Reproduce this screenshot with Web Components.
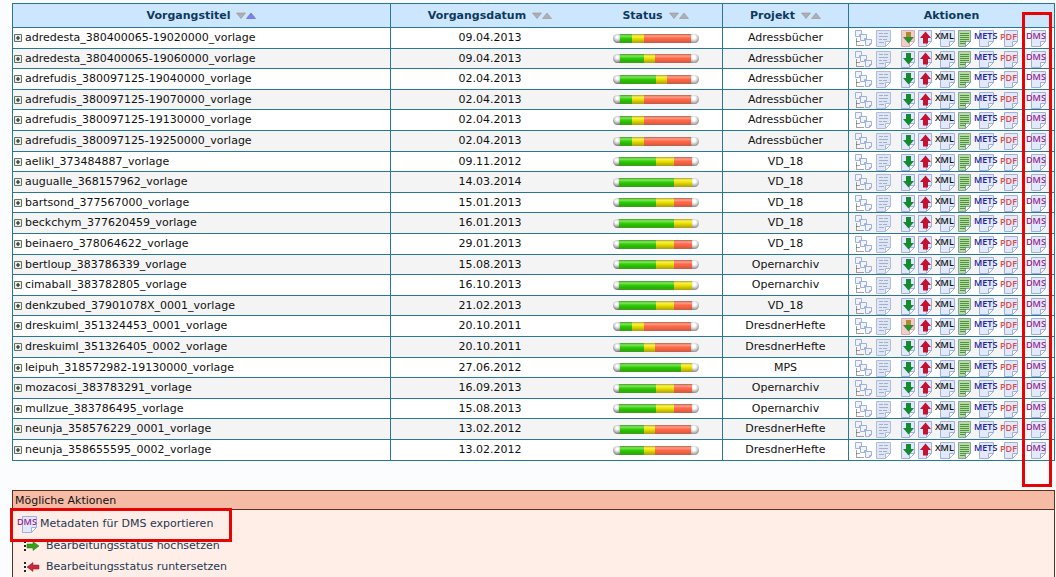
<!DOCTYPE html>
<html lang="de">
<head>
<meta charset="utf-8">
<title>Vorgänge</title>
<style>
html, body { margin: 0; }
body { background: #fbfcfe; color: #111; font: 11px/16px "DejaVu Sans", Verdana, sans-serif; }
</style>
</head>
<body>
<process-page></process-page>

<template id="page">
<style>
:host { display: flex; flex-direction: column; box-sizing: border-box; min-height: 100vh; padding: 3px 1px 0 12px; gap: 29px; }
action-legend { flex: 1; }
</style>
<process-table></process-table>
<action-legend>
  <span slot="title">Mögliche Aktionen</span>
  <legend-entry icon="dms" marked>Metadaten für DMS exportieren</legend-entry>
  <legend-entry icon="up">Bearbeitungsstatus hochsetzen</legend-entry>
  <legend-entry icon="down">Bearbeitungsstatus runtersetzen</legend-entry>
</action-legend>
</template>

<template id="table">
<style>
:host { display: block; position: relative; }
table { width: 100%; table-layout: fixed; border-spacing: 0; border: solid #2a7698; border-width: 1px 0 0 1px; background: #fff; }
th, td { box-sizing: border-box; height: 21px; padding: 0; border: solid #2a7698; border-width: 0 1px 1px 0; text-align: center; vertical-align: middle; line-height: 16px; white-space: nowrap; }
th { height: 24px; background: #cce6fe; color: #0d3a5c; }
th:nth-child(2), td:nth-child(2) { border-right: 0; }
tr:nth-child(5n+2) td, tr:nth-child(5n+4) td { height: 20px; }
tr:nth-child(even) td { background: #f4f4f4; }
td:first-child { text-align: left; }
td:last-child { padding-left: 6px; }
.title { display: flex; align-items: center; gap: 3px; padding-left: 1px; }
button { width: 8px; height: 8px; padding: 0; border: 0; background: none; display: block; }
button svg { display: block; }
status-bar { margin: 0 auto; }
.date { width: 198px; } .status { width: 134px; } .project { width: 126px; } .actions { width: 206px; }
.mark { position: absolute; top: 9px; right: 3px; bottom: -26px; width: 30px; box-sizing: border-box; border: 3px solid #e60505; pointer-events: none; }
</style>
<table>
  <colgroup><col><col class="date"><col class="status"><col class="project"><col class="actions"></colgroup>
  <thead><tr>
    <th scope="col"><sort-header active="up">Vorgangstitel</sort-header></th>
    <th scope="col"><sort-header>Vorgangsdatum</sort-header></th>
    <th scope="col"><sort-header>Status</sort-header></th>
    <th scope="col"><sort-header>Projekt</sort-header></th>
    <th scope="col">Aktionen</th>
  </tr></thead>
  <tbody></tbody>
</table>
<div class="mark"></div>
</template>

<template id="sort">
<style>
:host { display: flex; align-items: center; justify-content: center; gap: 6px; }
.arrows { display: flex; }
button { width: 10px; height: 8px; padding: 0; border: 0; background: none; }
svg { display: block; }
path { fill: #b0aeb0; stroke: #969496; stroke-width: .6; }
:host([active="up"]) .up path { fill: #8080ec; stroke: #5c5cd0; }
</style>
<slot></slot>
<span class="arrows">
  <button aria-label="Absteigend sortieren"><svg width="10" height="8"><path d="M.5 1H9.500L5 6.500Z"/></svg></button>
  <button class="up" aria-label="Aufsteigend sortieren"><svg width="10" height="8"><path d="M.5 6.500H9.500L5 1Z"/></svg></button>
</span>
</template>

<template id="status">
<style>
:host { display: flex; width: 86px; height: 9px; }
i { height: 9px; }
.cap { flex: 1; border-radius: 5px 0 0 5px; background: radial-gradient(circle at 60% 35%, #fff 15%, #c8c8c8 45%, #555 95%); }
.cap.end { border-radius: 0 5px 5px 0; background: radial-gradient(circle at 35% 35%, #fff 20%, #c8c8c8 50%, #666 95%); }
.g { background: linear-gradient(#3f9a22, #86e660 22%, #35cf0c 45%, #27b800 70%, #3b9c1c); }
.y { background: linear-gradient(#aaa020, #f8f060 22%, #efe500 45%, #cfc400 70%, #a89c20); }
.r { background: linear-gradient(#b86048, #ffa08a 22%, #ff6a4c 45%, #f4603f 70%, #b8604c); }
</style>
<i class="cap"></i><i class="g"></i><i class="y"></i><i class="r"></i><i class="cap end"></i>
</template>

<template id="actions">
<style>
:host { display: flex; align-items: center; height: 18px; }
a { display: block; height: 18px; }
a + a { margin-left: 2px; }
a.doc { margin-left: 4px; }
a.green { margin-left: 9px; }
a.dms { margin-left: 8px; }
</style>
</template>

<template id="legend">
<style>
:host { display: block; border: solid #5e3020; border-width: 1px 1px 0 1px; background: #ffeee8; }
header { height: 18px; padding-left: 2px; line-height: 19px; background: #f5bba5; border-bottom: 1px solid #5e3020; }
.list { display: flex; flex-direction: column; }
</style>
<header><slot name="title"></slot></header>
<div class="list"><slot></slot></div>
</template>

<template id="entry">
<style>
:host { display: block; position: relative; height: 21px; color: #1c3850; }
:host([marked]) { height: 25px; z-index: 1; }
a { display: flex; align-items: center; height: 100%; gap: 6px; padding-left: 9px; color: inherit; text-decoration: none; }
:host([marked]) a { gap: 3px; padding: 2px 0 0 4px; height: 24px; }
.mark { display: none; }
:host([marked]) .mark { display: block; position: absolute; left: -3px; top: -2px; width: 222px; height: 34px; box-sizing: border-box; border: 3px solid #e60505; pointer-events: none; }
svg { display: block; }
</style>
<a href="#"><span class="icon"></span><slot></slot></a>
<div class="mark"></div>
</template>

<script>
const tpl = id => document.getElementById(id).content.cloneNode(true);
const svg = (w, body) => `<svg width="${w}" height="18" viewBox="0 0 ${w} 18" aria-hidden="true">${body}</svg>`;

// Folded sheet of paper, x is its left edge and w its width.
const sheet = (x, w, fill = '#e2e9fb', line = '#9fb1da') =>
  `<path d="M${x + .5} 1.500H${x + w - .5}V12.500L${x + w - 5.5} 17.500H${x + .5}Z" fill="${fill}" stroke="${line}"/>` +
  `<path d="M${x + w - .5} 12.500H${x + w - 5.5}V17.500Z" fill="#f8faff" stroke="${line}"/>`;
const label = (t, x, y, fill) =>
  `<text x="${x}" y="${y}" font-family="Open Sans, Noto Sans, sans-serif" font-size="9" font-weight="600" fill="${fill}">${t}</text>`;
const mini = (x, y) =>
  `<path d="M${x + .5} ${y + .5}h6v4l-2 2h-4z" fill="#f0f4ff" stroke="#9fb1da"/><path d="M${x + 6.5} ${y + 4.5}h-2v2" fill="none" stroke="#9fb1da"/>`;
const down = (top, bottom) =>
  `<path d="M5 3h5v5H13L7.500 14.500L2 8H5Z" fill="${bottom}"/><path d="M5 3h5v5h-5z" fill="${top}"/>`;

const icons = {
  tree: svg(17, '<path d="M1.500 9.500V16.500H9M1.500 12.500H5" fill="none" stroke="#444" stroke-dasharray="1 1"/>' +
    mini(0, 1) + mini(5, 5) + mini(10, 10)),
  doc: svg(16, sheet(0, 15, '#dfe6f5', '#adbbdc') +
    '<path d="M3 4.500h4m1 0h4M3 7.500h9M3 10.500h3m1 0h4M3 13.500h5" stroke="#a6afc4"/>'),
  green: svg(15, sheet(0, 14) + down('#168a30', '#168a30')),
  mixed: svg(15, sheet(0, 14, '#f3cccc', '#d9aeb8') + down('#b08a30', '#2a9030')),
  red: svg(15, sheet(0, 14) + '<path d="M5 14.500h5V9H13L7.500 2.500L2 9H5Z" fill="#c41230"/>'),
  xml: svg(21, sheet(5, 15) + label('XML', 0, 10, '#111')),
  list: svg(14, sheet(0, 13, '#b9dc9c', '#86a3a8') +
    '<path d="M2 4.500h9M2 6.500h9M2 8.500h9M2 10.500h9M2 12.500h6M2 14.500h5" stroke="#4c9448"/>'),
  mets: svg(24, sheet(5, 15) + label('METS', 0, 10, '#22229a')),
  pdf: svg(18, sheet(4, 14) + label('PDF', 0, 11, '#dc4a48')),
  dms: svg(20, sheet(5, 15) + label('DMS', 0, 10, '#96288e')),
  up: svg(18, '<path d="M2 4h2v2H2zM2 8h2v2H2zM2 12h2v2H2z" fill="#222"/><path d="M5 7h6V4.500L17 9L11 13.500V11H5Z" fill="#38a018" stroke="#257010" stroke-width=".5"/>'),
  down: svg(18, '<path d="M2 4h2v2H2zM2 8h2v2H2zM2 12h2v2H2z" fill="#222"/><path d="M17 7H11V4.500L5 9L11 13.500V11H17Z" fill="#c82838" stroke="#901828" stroke-width=".5"/>'),
  plus: '<svg width="8" height="8" aria-hidden="true"><path d="M.5.5h7v7h-7z" fill="#e6eee6" stroke="#647464"/><path d="M2 4h4M4 2v4" stroke="#222" stroke-width="1.200"/></svg>'
};

class Base extends HTMLElement {
  constructor(id) { super(); this.attachShadow({ mode: 'open' }).append(tpl(id)); }
}

customElements.define('sort-header', class extends Base { constructor() { super('sort'); } });

customElements.define('status-bar', class extends Base {
  constructor() { super('status'); }
  connectedCallback() {
    const parts = this.getAttribute('parts').split(' ').map(Number);
    ['g', 'y', 'r'].forEach((c, i) => { this.shadowRoot.querySelector('.' + c).style.width = parts[i] + 'px'; });
  }
});

customElements.define('row-actions', class extends Base {
  constructor() { super('actions'); }
  connectedCallback() {
    const second = this.hasAttribute('mixed') ? 'mixed' : 'green';
    const list = [['tree', 'Struktur'], ['doc', 'Metadaten'], ['green', 'Importieren'], ['red', 'Exportieren'],
      ['xml', 'Laufzettel'], ['list', 'Protokoll'], ['mets', 'METS-Export'], ['pdf', 'PDF-Export'], ['dms', 'DMS-Export']];
    this.shadowRoot.append(...list.map(([key, name]) => {
      const a = document.createElement('a');
      a.href = '#'; a.className = key; a.setAttribute('aria-label', name);
      a.innerHTML = icons[key === 'green' ? second : key];
      return a;
    }));
  }
});

const bars = { a: '12 12 47', b: '24 11 36', c: '36 11 24', d: '37 18 18', e: '55 18 0', f: '61 11 0' };
const rows = [
  ['adredesta_380400065-19020000_vorlage', '09.04.2013', 'a', 'Adressbücher', true],
  ['adredesta_380400065-19060000_vorlage', '09.04.2013', 'b', 'Adressbücher'],
  ['adrefudis_380097125-19040000_vorlage', '02.04.2013', 'c', 'Adressbücher'],
  ['adrefudis_380097125-19070000_vorlage', '02.04.2013', 'a', 'Adressbücher'],
  ['adrefudis_380097125-19130000_vorlage', '02.04.2013', 'a', 'Adressbücher'],
  ['adrefudis_380097125-19250000_vorlage', '02.04.2013', 'a', 'Adressbücher'],
  ['aelikl_373484887_vorlage', '09.11.2012', 'd', 'VD_18'],
  ['augualle_368157962_vorlage', '14.03.2014', 'e', 'VD_18'],
  ['bartsond_377567000_vorlage', '15.01.2013', 'd', 'VD_18'],
  ['beckchym_377620459_vorlage', '16.01.2013', 'e', 'VD_18'],
  ['beinaero_378064622_vorlage', '29.01.2013', 'd', 'VD_18'],
  ['bertloup_383786339_vorlage', '15.08.2013', 'd', 'Opernarchiv'],
  ['cimaball_383782805_vorlage', '16.10.2013', 'e', 'Opernarchiv'],
  ['denkzubed_37901078X_0001_vorlage', '21.02.2013', 'd', 'VD_18'],
  ['dreskuiml_351324453_0001_vorlage', '20.10.2011', 'a', 'DresdnerHefte', true],
  ['dreskuiml_351326405_0002_vorlage', '20.10.2011', 'b', 'DresdnerHefte'],
  ['leipuh_318572982-19130000_vorlage', '27.06.2012', 'f', 'MPS'],
  ['mozacosi_383783291_vorlage', '16.09.2013', 'd', 'Opernarchiv'],
  ['mullzue_383786495_vorlage', '15.08.2013', 'd', 'Opernarchiv'],
  ['neunja_358576229_0001_vorlage', '13.02.2012', 'b', 'DresdnerHefte'],
  ['neunja_358655595_0002_vorlage', '13.02.2012', 'b', 'DresdnerHefte']
];

customElements.define('process-table', class extends Base {
  constructor() {
    super('table');
    this.shadowRoot.querySelector('tbody').innerHTML = rows.map(([title, date, bar, project, mixed]) =>
      `<tr><td><div class="title"><button aria-label="Aufklappen">${icons.plus}</button><span>${title}</span></div></td>` +
      `<td>${date}</td><td><status-bar parts="${bars[bar]}"></status-bar></td><td>${project}</td>` +
      `<td><row-actions${mixed ? ' mixed' : ''}></row-actions></td></tr>`).join('');
  }
});

customElements.define('legend-entry', class extends Base {
  constructor() { super('entry'); }
  connectedCallback() { this.shadowRoot.querySelector('.icon').innerHTML = icons[this.getAttribute('icon')]; }
});
customElements.define('action-legend', class extends Base { constructor() { super('legend'); } });
customElements.define('process-page', class extends Base { constructor() { super('page'); } });
</script>
</body>
</html>
